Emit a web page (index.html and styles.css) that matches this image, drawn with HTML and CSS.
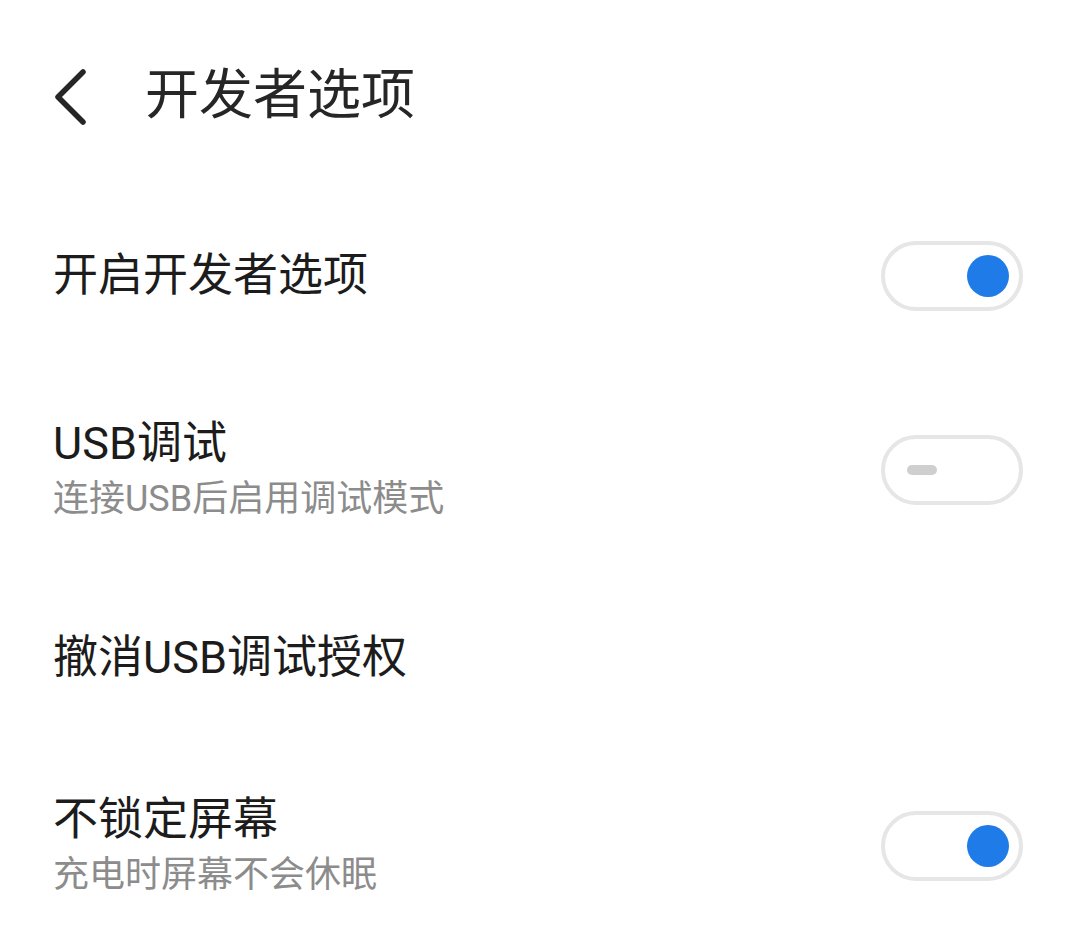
FILE: index.html
```html
<!DOCTYPE html>
<html lang="zh-CN">
<head>
  <meta charset="UTF-8" />
  <meta name="viewport" content="width=device-width,initial-scale=1.0" />
  <title>开发者选项</title>
  <link rel="stylesheet" href="styles.css">
</head>
<body>
  <header class="top-bar">
    <button class="back-btn" aria-label="返回">
      <svg width="40" height="56" viewBox="0 0 40 56">
        <polyline points="30,3 5,28 30,53" fill="none" stroke="#262626" stroke-width="5.5" stroke-linecap="round" stroke-linejoin="round" />
      </svg>
    </button>
    <h1 class="page-title">开发者选项</h1>
  </header>

  <main class="settings">
    <div class="setting-row">
      <div class="setting-text">
        <div class="setting-label">开启开发者选项</div>
      </div>
      <div class="switch is-on"><span class="knob"></span></div>
    </div>

    <div class="setting-row">
      <div class="setting-text">
        <div class="setting-label">USB调试</div>
        <div class="setting-desc">连接USB后启用调试模式</div>
      </div>
      <div class="switch"><span class="knob"></span></div>
    </div>

    <div class="setting-row">
      <div class="setting-text">
        <div class="setting-label">撤消USB调试授权</div>
      </div>
    </div>

    <div class="setting-row">
      <div class="setting-text">
        <div class="setting-label">不锁定屏幕</div>
        <div class="setting-desc">充电时屏幕不会休眠</div>
      </div>
      <div class="switch is-on"><span class="knob"></span></div>
    </div>
  </main>
</body>
</html>
```

FILE: styles.css
```css
:root {
  --color-text: #1c1c1c;
  --color-title: #262626;
  --color-muted: #8c8c8c;
  --color-accent: #1e7be8;
  --color-track: #e6e6e6;
  --side: 53px;
}

* {
  box-sizing: border-box;
}

body {
  margin: 0;
  background: #ffffff;
  color: var(--color-text);
  font-family: Roboto, "Noto Sans CJK SC", sans-serif;
}

.top-bar {
  height: 189px;
  padding: 4px 0 0 var(--side);
  display: flex;
  align-items: center;
}

.back-btn {
  border: none;
  background: none;
  padding: 0;
  width: 40px;
  height: 56px;
  display: flex;
  cursor: pointer;
}

.page-title {
  margin: 0 0 0 52px;
  font-size: 54px;
  font-weight: 400;
  color: var(--color-title);
  line-height: 1.2;
}

.setting-row {
  display: flex;
  align-items: center;
  justify-content: space-between;
  padding: 52px 54px 52px var(--side);
}

.setting-label {
  font-size: 45px;
  line-height: 58px;
  font-weight: 400;
}

.setting-desc {
  font-size: 36px;
  line-height: 52px;
  color: var(--color-muted);
}

.switch {
  width: 142px;
  height: 70px;
  border: 4px solid var(--color-track);
  border-radius: 35px;
  display: flex;
  align-items: center;
  justify-content: flex-start;
  padding-left: 22px;
  flex-shrink: 0;
}

.switch .knob {
  width: 30px;
  height: 10px;
  border-radius: 5px;
  background: #cfcfcf;
}

.switch.is-on {
  justify-content: flex-end;
  padding: 0 10px 0 0;
}

.switch.is-on .knob {
  width: 42px;
  height: 42px;
  border-radius: 50%;
  background: var(--color-accent);
}
```
